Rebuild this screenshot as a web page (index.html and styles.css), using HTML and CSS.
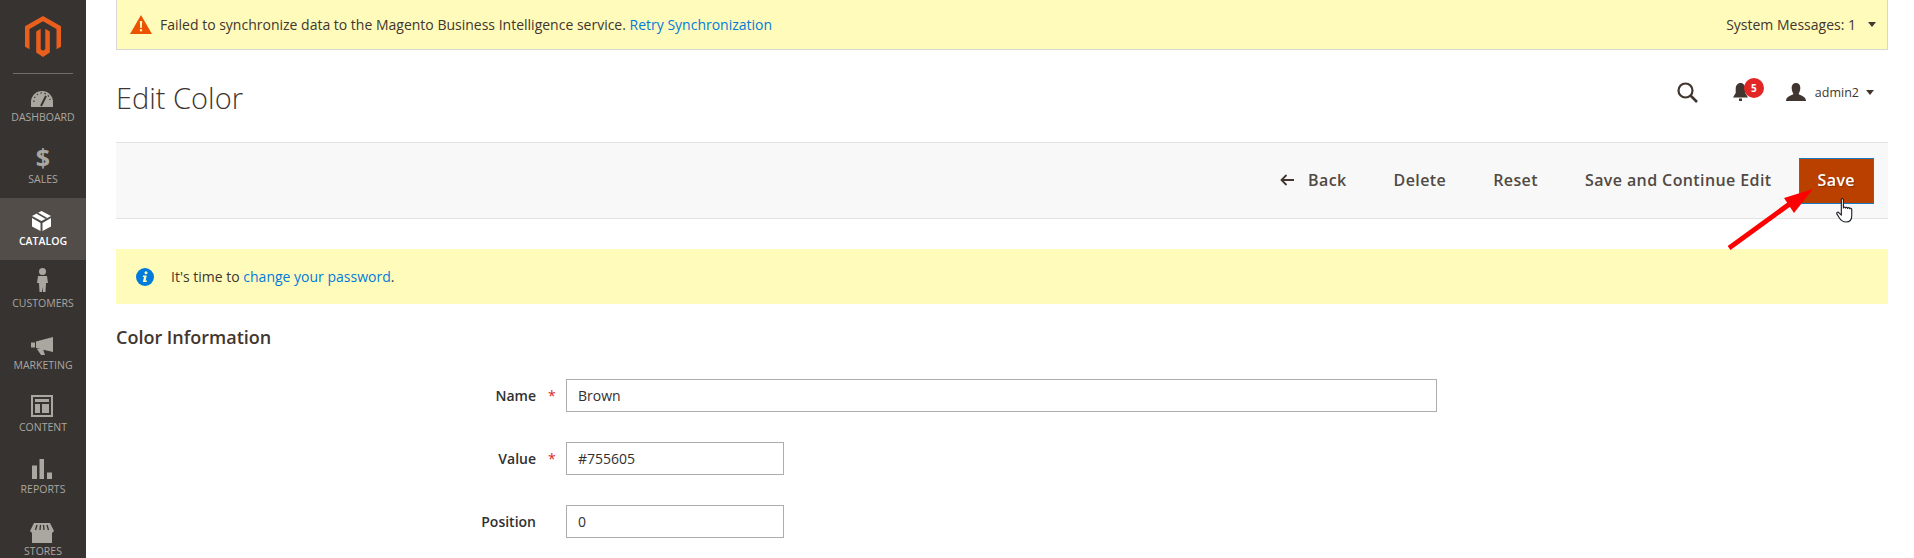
FILE: index.html
```html
<!DOCTYPE html>
<html lang="en">
<head>
<meta charset="utf-8">
<title>Edit Color</title>
<link rel="stylesheet" href="styles.css">
</head>
<body>
<div class="page">
  <!-- left menu -->
  <nav class="sidebar">
    <div class="logo-wrap">
      <svg class="logo" viewBox="0 0 36 41" width="36" height="41">
        <path fill="#eb5f1e" d="M18 0 36 10.3V30.7L31.5 33.3V12.9L18 5.2 4.500 12.9V33.3L0 30.7V10.3Z"/>
        <path fill="#eb5f1e" d="M11.2 15.4 15.7 12.8V33.3L18 34.7 20.3 33.3V12.8L24.8 15.4V36.6L18 41 11.2 36.6Z"/>
      </svg>
    </div>
    <a class="nav-item">
      <svg class="nav-icon" viewBox="0 0 30 30" width="30" height="30">
        <path fill="#aaa6a0" d="M3 27V22A11 11 0 0 1 25 22V27Z"/>
        <path stroke="#373330" stroke-width="2" d="M13 26 18 16"/>
        <path stroke="#373330" stroke-width="1.2" stroke-dasharray="1.500 2.500" fill="none" d="M6 22A8 8 0 0 1 22 20"/>
      </svg>
      <span>Dashboard</span>
    </a>
    <a class="nav-item">
      <span class="nav-dollar">$</span>
      <span>Sales</span>
    </a>
    <a class="nav-item active">
      <svg class="nav-icon" viewBox="0 0 30 30" width="30" height="30">
        <path fill="#fff" d="M13.5 7 23 12 13.5 17 4 12Z"/>
        <path stroke="#524d49" stroke-width="1.5" d="M9 9 18.5 14.5"/>
        <path fill="#fff" d="M4 14 12.5 19V27L4 22.5ZM23 14 14.5 19V27L23 22.5Z"/>
      </svg>
      <span>Catalog</span>
    </a>
    <a class="nav-item">
      <svg class="nav-icon" viewBox="0 0 30 30" width="30" height="30">
        <circle cx="14.5" cy="5.5" r="3.5" fill="#aaa6a0"/>
        <path fill="#aaa6a0" d="M10 10H19L20 17H18L17.5 26H15L14.5 21 14 26H11.5L11 17H9Z"/>
      </svg>
      <span>Customers</span>
    </a>
    <a class="nav-item">
      <svg class="nav-icon" viewBox="0 0 30 30" width="30" height="30">
        <path fill="#aaa6a0" d="M25 9V24L8 20V13.5ZM3 14.500H7V19.500H3ZM9 21H15L17 27H13Z"/>
      </svg>
      <span>Marketing</span>
    </a>
    <a class="nav-item">
      <svg class="nav-icon" viewBox="0 0 30 30" width="30" height="30">
        <rect x="4" y="6" width="20" height="20" fill="none" stroke="#aaa6a0" stroke-width="2"/>
        <path fill="#aaa6a0" d="M7 9H21V12H7ZM7 14H12V23H7ZM14 14H21V23H14Z"/>
      </svg>
      <span>Content</span>
    </a>
    <a class="nav-item">
      <svg class="nav-icon" viewBox="0 0 30 30" width="30" height="30">
        <path fill="#aaa6a0" d="M4 13.5H9V27H4ZM11.5 7H16V27H11.5ZM19 20.5H24V27H19Z"/>
      </svg>
      <span>Reports</span>
    </a>
    <a class="nav-item">
      <svg class="nav-icon" viewBox="0 0 30 30" width="30" height="30">
        <path fill="#aaa6a0" d="M6 9H22L26 17 24 19V29H4V19L2 17Z"/>
        <path stroke="#373330" stroke-width="1.3" d="M9 11 7.500 16M12.500 11 12 16M15.500 11 16 16M19 11 20.500 16"/>
      </svg>
      <span>Stores</span>
    </a>
  </nav>

  <main class="content">
    <div class="sys-message">
      <div class="sys-left">
        <svg viewBox="0 0 22 19" width="22" height="19">
          <path fill="#eb5202" d="M11 0 22 19H0Z"/>
          <path fill="#fffbbb" d="M9.800 6H12.200L11.800 13H10.200ZM9.900 14.200H12.100V16.300H9.900Z"/>
        </svg>
        <span>Failed to synchronize data to the Magento Business Intelligence service. <a class="link">Retry Synchronization</a></span>
      </div>
      <div class="sys-right">System Messages: 1 <i class="caret sys-caret"></i></div>
    </div>

    <header class="page-head">
      <h1>Edit Color</h1>
      <div class="head-actions">
        <svg class="search-icon" viewBox="0 0 21 21" width="21" height="21">
          <circle cx="8.500" cy="8.500" r="7" fill="none" stroke="#41362f" stroke-width="2.200"/>
          <path stroke="#41362f" stroke-width="2.600" d="M13.500 13.500 20 20"/>
        </svg>
        <div class="bell">
          <svg viewBox="0 0 15 18" width="15" height="18">
            <path fill="#41362f" d="M7.500 0C10.500 0 12.300 2.500 12.300 6V10L15 14.500H0L2.700 10V6C2.700 2.500 4.500 0 7.500 0ZM6 15.500H9V18H6Z"/>
          </svg>
          <span class="badge">5</span>
        </div>
        <div class="user">
          <svg viewBox="0 0 20 18" width="20" height="18">
            <path fill="#41362f" d="M10 0C13 0 14.300 2.200 14.300 5 14.300 7.600 13.200 10 12.500 11 14 12.500 20 13 20 18H0C0 13 6 12.500 7.500 11 6.800 10 5.700 7.600 5.700 5 5.700 2.200 7 0 10 0Z"/>
          </svg>
          <span>admin2</span>
          <i class="caret"></i>
        </div>
      </div>
    </header>

    <div class="toolbar">
      <a class="btn btn-back">
        <svg viewBox="0 0 14 12" width="14" height="12">
          <path fill="none" stroke="#41362f" stroke-width="1.800" d="M14 6H2M6.500 1 1.500 6 6.500 11"/>
        </svg>
        Back
      </a>
      <a class="btn btn-delete">Delete</a>
      <a class="btn btn-reset">Reset</a>
      <a class="btn btn-continue">Save and Continue Edit</a>
      <a class="btn btn-primary">Save</a>
    </div>

    <div class="notice">
      <svg viewBox="0 0 18 18" width="18" height="18">
        <circle cx="9" cy="9" r="9" fill="#007bdb"/>
        <circle cx="10" cy="4.800" r="1.500" fill="#fffbbb"/>
        <path fill="#fffbbb" d="M7 7.500H10.800L9.600 12.500H11L10.700 14H6.800L8 9H6.800Z"/>
      </svg>
      <span>It's time to <a class="link">change your password</a>.</span>
    </div>

    <h2 class="section-title">Color Information</h2>

    <form class="color-form">
      <div class="field">
        <label for="color-name">Name</label>
        <span class="star">*</span>
        <input id="color-name" class="input-wide" type="text" value="Brown">
      </div>
      <div class="field">
        <label for="color-value">Value</label>
        <span class="star">*</span>
        <input id="color-value" type="text" value="#755605">
      </div>
      <div class="field">
        <label for="color-position">Position</label>
        <span class="star"></span>
        <input id="color-position" type="text" value="0">
      </div>
    </form>
  </main>
</div>

<!-- arrow and mouse pointer lying over the save button -->
<svg class="arrow" viewBox="0 0 90 62" width="90" height="62">
  <path stroke="#ff0000" stroke-width="5" d="M1 60 63 15"/>
  <path fill="#ff0000" d="M85 1 56 10 66 25Z"/>
</svg>
<svg class="hand" viewBox="0 0 18 24" width="19" height="25">
  <path fill="#fff" stroke="#1f2430" stroke-width="1.100" stroke-linejoin="round" d="M5 1.500C5 .3 7 .3 7 1.500V9.500C7 8.500 9 8.500 9 9.700 9 8.700 11 8.700 11 10 11 9 13 9 13 10.300 13 9.500 15 9.500 15 11V17C15 20 14 23 9.500 23 6 23 4.500 21.500 3 19L.8 15.500C0 14 1.700 13 2.800 14.200L5 16.500Z"/>
</svg>
</body>
</html>
```
FILE: styles.css
```css
html, body {
    margin: 0;
    height: 558px;
    overflow: hidden;
    background: #fff;
    font-family: "Open Sans", Arial, sans-serif;
    font-size: 14px;
    color: #41362f;
}

.page {
    display: flex;
    height: 558px;
}

/* sidebar */
.sidebar {
    width: 86px;
    flex: none;
    background: #373330;
    overflow: hidden;
}
.logo-wrap {
    height: 57px;
    margin: 0 13px;
    padding-top: 16px;
    border-bottom: 1px solid #736e69;
    display: flex;
    justify-content: center;
    align-items: flex-start;
}
.nav-item {
    height: 62px;
    padding-top: 6px;
    box-sizing: border-box;
    display: flex;
    flex-direction: column;
    align-items: center;
    font-size: 10.5px;
    line-height: 14px;
    color: #aaa6a0;
    text-transform: uppercase;
}
.nav-item.active {
    background: #524d49;
    color: #fff;
    font-weight: 600;
}
.nav-icon {
    flex: none;
}
.nav-dollar {
    height: 30px;
    font-size: 25px;
    font-weight: 700;
    line-height: 31px;
}

/* main column */
.content {
    flex: 1;
    min-width: 0;
    padding: 0 26px 0 30px;
}
.link {
    color: #007bdb;
}
.sys-message {
    height: 50px;
    box-sizing: border-box;
    border: 1px solid #d6d6d6;
    border-top: none;
    background: #fffbbb;
    padding: 0 11px 0 13px;
    display: flex;
    justify-content: space-between;
    align-items: center;
}
.sys-left {
    display: flex;
    align-items: center;
    gap: 8px;
}
.sys-right {
    display: flex;
    align-items: center;
}
.caret {
    display: inline-block;
    width: 0;
    height: 0;
    border-left: 4px solid transparent;
    border-right: 4px solid transparent;
    border-top: 5px solid #41362f;
}
.sys-caret {
    margin-left: 12px;
}

.page-head {
    height: 92px;
    display: flex;
    justify-content: space-between;
    align-items: center;
}
.page-head h1 {
    margin: 2px 0 0;
    font-size: 29px;
    font-weight: 300;
}
.head-actions {
    display: flex;
    align-items: center;
    padding: 0 14px 8px 0;
}
.search-icon {
    margin-right: 35px;
}
.bell {
    position: relative;
    height: 18px;
    margin-right: 38px;
}
.badge {
    position: absolute;
    left: 11px;
    top: -5px;
    width: 20px;
    height: 20px;
    border-radius: 50%;
    background: #e22626;
    color: #fff;
    font-size: 10px;
    font-weight: 700;
    line-height: 20px;
    text-align: center;
}
.user {
    display: flex;
    align-items: center;
    font-size: 12.5px;
}
.user span {
    margin: 0 7px 0 9px;
}

.toolbar {
    height: 77px;
    box-sizing: border-box;
    border-top: 1px solid #e3e3e3;
    border-bottom: 1px solid #e3e3e3;
    background: #f8f8f8;
    padding-right: 14px;
    display: flex;
    justify-content: flex-end;
    align-items: center;
}
.btn {
    height: 46px;
    box-sizing: border-box;
    padding: 0 15px 2px;
    display: flex;
    align-items: center;
    font-size: 16px;
    font-weight: 600;
    letter-spacing: .025em;
    color: #514943;
}
.btn-back svg {
    margin-right: 14px;
}
.btn-delete {
    margin-left: 17px;
}
.btn-reset {
    margin-left: 17px;
}
.btn-continue {
    margin-left: 17px;
}
.btn-primary {
    margin-left: 12px;
    padding: 0 18px 2px;
    background: #ba4000;
    border: 1px solid #1979c3;
    color: #fff;
    text-shadow: 1px 1px 1px rgba(0, 0, 0, .3);
}

.notice {
    height: 55px;
    margin-top: 30px;
    padding-left: 20px;
    background: #fffbbb;
    display: flex;
    align-items: center;
    gap: 17px;
}

.section-title {
    margin: 20px 0 0;
    font-size: 18px;
    font-weight: 600;
    line-height: 26px;
}

/* form */
.color-form {
    margin-top: 29px;
}
.field {
    display: flex;
    align-items: center;
    margin-bottom: 30px;
}
.field label {
    width: 420px;
    text-align: right;
    font-weight: 600;
    color: #303030;
}
.star {
    width: 30px;
    padding-left: 12px;
    box-sizing: border-box;
    color: #e22626;
    font-size: 14px;
}
input[type=text] {
    width: 218px;
    height: 33px;
    box-sizing: border-box;
    padding: 0 11px;
    border: 1px solid #adadad;
    border-radius: 0;
    font-family: "Open Sans", Arial, sans-serif;
    font-size: 14px;
    color: #303030;
}
input.input-wide {
    width: 871px;
}

/* annotation overlay */
.arrow {
    position: absolute;
    left: 1728px;
    top: 188px;
}
.hand {
    position: absolute;
    left: 1836px;
    top: 198px;
}
```
